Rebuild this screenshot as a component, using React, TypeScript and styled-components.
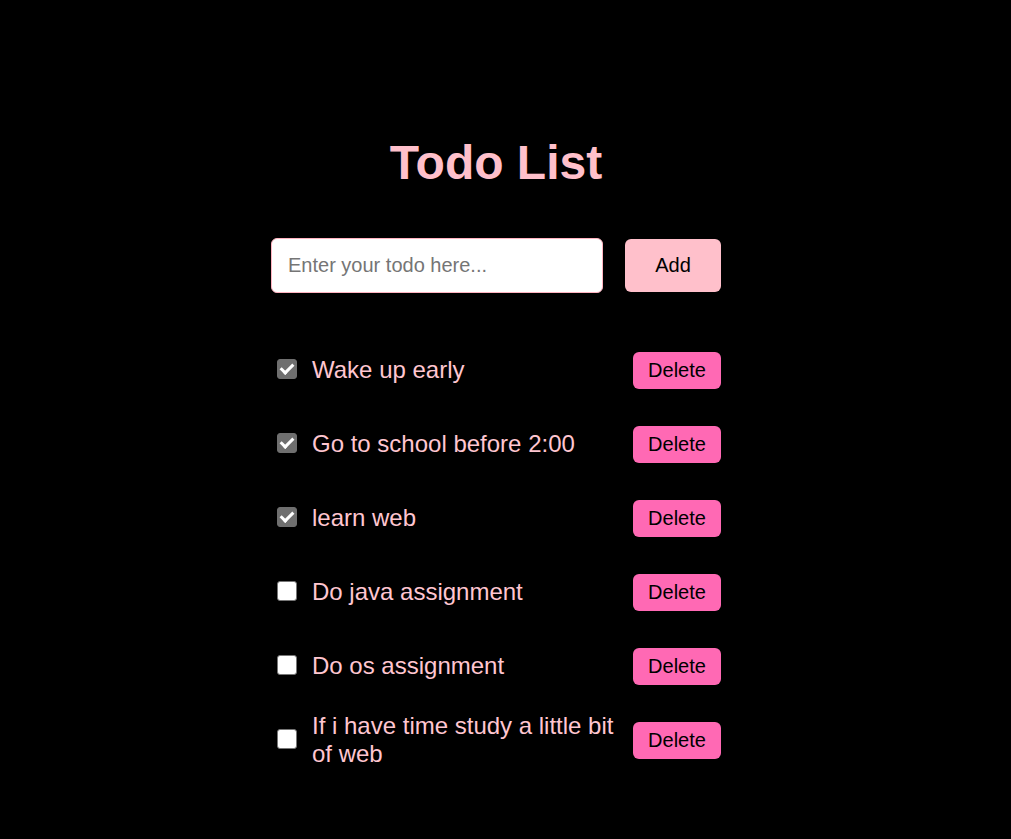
import React, { useState } from "react";
import styled, { createGlobalStyle } from "styled-components";

const GlobalStyle = createGlobalStyle`
  html, body {
    margin: 0;
    padding: 0;
    background: #000;
  }
  body {
    font-family: "Liberation Sans", Arial, sans-serif;
    min-height: 839px;
  }
`;

const Page = styled.div`
  display: flex;
  justify-content: center;
  padding: 135px 19px 0 0;
`;

const Container = styled.div`
  width: 450px;
  display: flex;
  flex-direction: column;
`;

const Title = styled.h1`
  margin: 0 0 47px;
  font-size: 48px;
  line-height: 56px;
  font-weight: bold;
  text-align: center;
  color: #ffc0cb;
`;

const InputRow = styled.div`
  display: flex;
  align-items: center;
  gap: 22px;
`;

const TodoInput = styled.input`
  box-sizing: border-box;
  width: 332px;
  height: 55px;
  padding: 0 16px;
  border: 1px solid #ffb3c0;
  border-radius: 6px;
  background: #fff;
  font-family: "Liberation Sans", Arial, sans-serif;
  font-size: 20px;
  color: #000;
  outline: none;
  &::placeholder {
    color: #757575;
  }
`;

const AddButton = styled.button`
  width: 96px;
  height: 53px;
  border: none;
  border-radius: 6px;
  background: #ffc0cb;
  color: #000;
  font-family: "Liberation Sans", Arial, sans-serif;
  font-size: 20px;
  cursor: pointer;
`;

const List = styled.ul`
  list-style: none;
  margin: 40px 0 0;
  padding: 0;
`;

const Row = styled.li`
  height: 74px;
  display: flex;
  align-items: center;
  gap: 15px;
  padding-left: 6px;
`;

const Check = styled.input`
  appearance: none;
  -webkit-appearance: none;
  position: relative;
  box-sizing: border-box;
  width: 20px;
  height: 20px;
  margin: 0 0 2px;
  flex: none;
  border: 1.5px solid #767676;
  border-radius: 3px;
  background: #fff;
  cursor: pointer;
  &:checked {
    background: #6f6f6f;
    border-color: #6f6f6f;
  }
  &:checked::after {
    content: "";
    position: absolute;
    left: 5px;
    top: 1px;
    width: 5px;
    height: 10px;
    border: solid #fff;
    border-width: 0 3px 3px 0;
    transform: rotate(45deg);
  }
`;

const Text = styled.span`
  flex: 1;
  font-size: 24px;
  line-height: 28px;
  color: #ffc6d0;
`;

const DeleteButton = styled.button`
  flex: none;
  width: 88px;
  height: 37px;
  border: none;
  border-radius: 6px;
  background: #ff69b4;
  color: #000;
  font-family: "Liberation Sans", Arial, sans-serif;
  font-size: 20px;
  cursor: pointer;
`;

type Todo = { id: number; text: string; done: boolean };

const initial: Todo[] = [
  { id: 1, text: "Wake up early", done: true },
  { id: 2, text: "Go to school before 2:00", done: true },
  { id: 3, text: "learn web", done: true },
  { id: 4, text: "Do java assignment", done: false },
  { id: 5, text: "Do os assignment", done: false },
  { id: 6, text: "If i have time study a little bit of web", done: false },
];

export default function App() {
  const [todos, setTodos] = useState<Todo[]>(initial);
  const [value, setValue] = useState("");

  const add = () => {
    if (!value.trim()) return;
    setTodos([...todos, { id: Date.now(), text: value.trim(), done: false }]);
    setValue("");
  };

  return (
    <>
      <GlobalStyle />
      <Page>
        <Container>
          <Title>Todo List</Title>
          <InputRow>
            <TodoInput
              placeholder="Enter your todo here..."
              value={value}
              onChange={(e) => setValue(e.target.value)}
            />
            <AddButton onClick={add}>Add</AddButton>
          </InputRow>
          <List>
            {todos.map((t) => (
              <Row key={t.id}>
                <Check
                  type="checkbox"
                  checked={t.done}
                  onChange={() =>
                    setTodos(todos.map((x) => (x.id === t.id ? { ...x, done: !x.done } : x)))
                  }
                />
                <Text>{t.text}</Text>
                <DeleteButton onClick={() => setTodos(todos.filter((x) => x.id !== t.id))}>
                  Delete
                </DeleteButton>
              </Row>
            ))}
          </List>
        </Container>
      </Page>
    </>
  );
}
